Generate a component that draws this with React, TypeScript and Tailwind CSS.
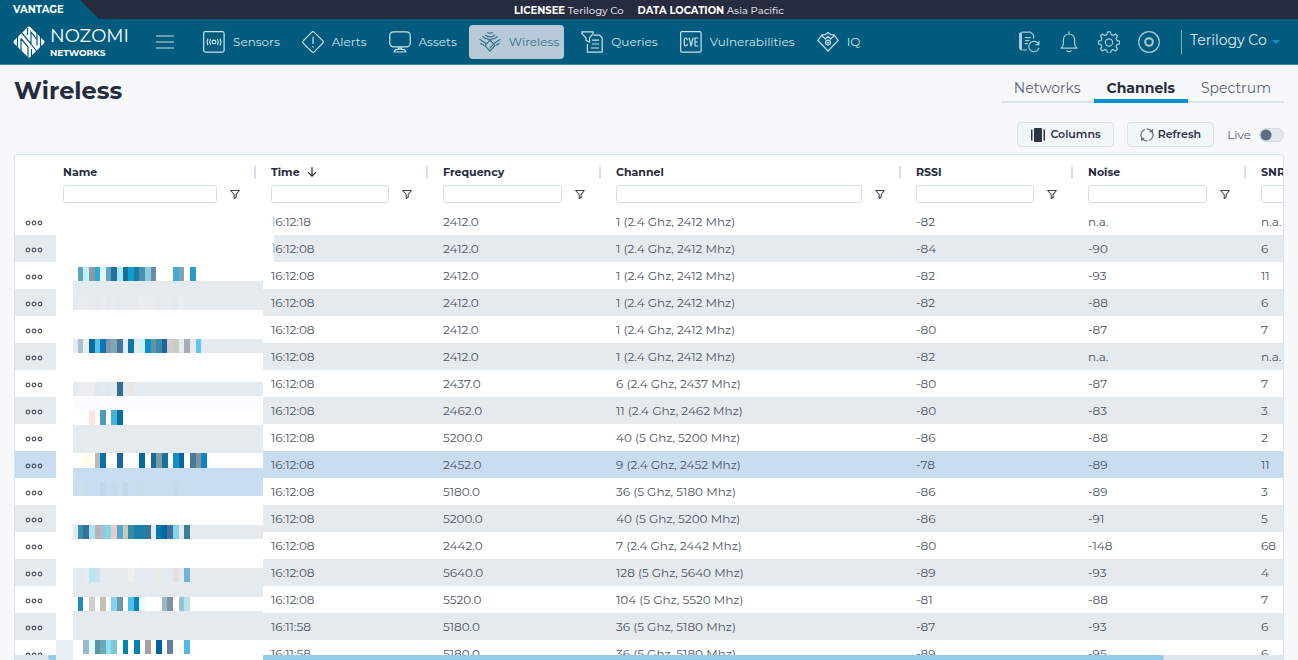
import { useState } from "react";
import type { ReactNode } from "react";
import clsx from "clsx";

const Icon = ({ children }: { children: ReactNode }) => (
  <svg
    viewBox="0 0 22 22"
    fill="none"
    stroke="currentColor"
    strokeWidth="1.2"
    strokeLinecap="round"
    strokeLinejoin="round"
    aria-hidden="true"
    className="h-[22px] w-[22px] shrink-0"
  >
    {children}
  </svg>
);

const SensorsIcon = () => (
  <Icon>
    <rect x="0.7" y="0.7" width="20.4" height="20.4" rx="1.8" />
    <circle cx="11" cy="11" r="1.8" />
    <path d="M7.4 8.6c-.9 1.500-.9 3.300 0 4.800M14.600 8.600c.9 1.500.9 3.300 0 4.800M4.800 8c-.9 1.900-.9 4.100 0 6M17.200 8c.9 1.900.9 4.100 0 6" />
  </Icon>
);

const AlertsIcon = () => (
  <Icon>
    <path d="M9.900 1.200 1.200 9.900a1.500 1.500 0 0 0 0 2.200l8.700 8.700a1.500 1.500 0 0 0 2.200 0l8.700-8.700a1.500 1.500 0 0 0 0-2.200l-8.700-8.700a1.500 1.500 0 0 0-2.200 0Z" />
    <path d="M11 6v6.500M11 15.500v.6" />
  </Icon>
);

const AssetsIcon = () => (
  <Icon>
    <rect x="0.8" y="0.8" width="20.4" height="15" rx="3.600" />
    <path d="M9.800 15.800v2.200M12.200 15.800v2.200M5.200 21c0-1.800 2-2.800 5.800-2.800s5.800 1 5.800 2.800Z" />
  </Icon>
);

const WirelessIcon = () => (
  <Icon>
    <path d="m11 9 5 5.600-5 5.600-5-5.600ZM11 16.800l2.800-3" />
    <path d="M8.600 1.600c1.500.9 3.300.9 4.800 0M6.400 4.200c2.700 2 6.500 2 9.200 0M3.600 5.600c4.200 4 10.600 4 14.800 0M1 8.600l5.600 3.600M21 8.600l-5.600 3.600M1.800 12.400l3 1.800M20.200 12.400l-3 1.800" />
  </Icon>
);

const QueriesIcon = () => (
  <Icon>
    <path d="M.8.800h11.400v1.600L8.600 6.800v4.400L5 9.200V6.800L.8 2.400Z" />
    <path d="M13 4.200h5.600l2.600 2.600v14.400H6.400v-7.600M11.400 9.200h6.200M11.400 13h6.200M10 17h7.600" />
  </Icon>
);

const CveIcon = () => (
  <Icon>
    <rect x="0.7" y="0.7" width="20.4" height="20.4" rx="1.200" />
    <path d="M7.200 8.800c0-1.200-.5-1.800-1.400-1.800s-1.500.6-1.500 1.800v4.400c0 1.200.6 1.800 1.500 1.800s1.400-.6 1.400-1.800M9.200 7l1.900 8L13 7M18 7h-3v8h3M15 11h2.500" />
  </Icon>
);

const IqIcon = () => (
  <Icon>
    <path d="M8.400 3.600 5 3.800.8 9.400 11 20 21.200 9.400 17 3.800l-3.400-.2L11 1.600ZM4.600 4.400 8.400 8 11 5.400 13.600 8l3.800-3.600" />
    <path d="m11 9 2.400 1.200v2.600L11 14.200l-2.400-1.400v-2.600Z" />
    <circle cx="11" cy="11.600" r="0.500" />
  </Icon>
);

const ReportIcon = () => (
  <Icon>
    <path d="M4 1.200h8.600l3 3v3M8.800 19H4M7.400 6.600h5M7.400 9.600h3.600M7.400 12.600h2" />
    <path
      d="M3.400 1.800c-1.200 0-1.800.6-1.800 1.600v13.400c0 1 .6 1.800 1.800 1.800Z"
      fill="currentColor"
    />
    <path d="M21 10.400v3.200h-3.200M20.600 13.200a5.200 5.200 0 1 0 .2 4.200" />
  </Icon>
);

const BellIcon = () => (
  <Icon>
    <path d="M11 .8v1.800M3 17.200h16c-1.800-1.600-2.400-3-2.400-5V8.600a5.600 5.600 0 0 0-11.200 0v3.600c0 2-.6 3.400-2.400 5ZM9 19.800c.9 1.100 3.100 1.100 4 0" />
  </Icon>
);

const GearIcon = () => (
  <Icon>
    <path d="M9.600.9h2.800l.8 2.700 1.900.8 2.400-1.400 2 2-1.400 2.400.8 1.900 2.700.8v2.800l-2.700.8-.8 1.900 1.400 2.400-2 2-2.400-1.400-1.900.8-.8 2.700H9.600l-.8-2.700-1.900-.8L4.500 20l-2-2 1.400-2.400-.8-1.900-2.700-.8v-2.800l2.700-.8.8-1.900L2.500 5l2-2 2.400 1.400 1.900-.8Z" />
    <circle cx="11" cy="11.500" r="3.600" />
  </Icon>
);

const AccountIcon = () => (
  <Icon>
    <circle cx="11" cy="11" r="10.300" />
    <circle cx="11" cy="11" r="3.800" strokeWidth="2" />
  </Icon>
);

const LogoMark = () => (
  <svg viewBox="0 0 32 32" aria-hidden="true" className="h-8 w-8 shrink-0">
    <path
      fill="#fff"
      d="M14.800 1a1.700 1.700 0 0 1 2.400 0L31 14.800a1.700 1.700 0 0 1 0 2.400L17.200 31a1.700 1.700 0 0 1-2.400 0L1 17.200a1.700 1.700 0 0 1 0-2.400Z"
    />
    <path
      fill="none"
      stroke="#005b7f"
      strokeWidth="1.200"
      d="M4.500 11v10.500M8 12.500l7 8.500V31M8 26V12.500M8.500 6.500 18 18V6l6 7.500V6.500M14.500 2v7M18 18l5.500 7M24 19.500V13M27.500 21V10.500M18.500 30v-7"
    />
  </svg>
);

const FilterIcon = () => (
  <svg
    viewBox="0 0 10 10"
    fill="none"
    stroke="currentColor"
    strokeWidth="1.100"
    strokeLinejoin="round"
    aria-hidden="true"
    className="h-[10px] w-[10px]"
  >
    <path d="M.7 1.500h8.600L6.200 5.500v2.800L4.200 9.400V5.500Z" />
  </svg>
);

const navItems = [
  { label: "Sensors", icon: SensorsIcon },
  { label: "Alerts", icon: AlertsIcon },
  { label: "Assets", icon: AssetsIcon },
  { label: "Wireless", icon: WirelessIcon },
  { label: "Queries", icon: QueriesIcon },
  { label: "Vulnerabilities", icon: CveIcon },
  { label: "IQ", icon: IqIcon },
];

const actions = [
  { label: "Reports", icon: ReportIcon },
  { label: "Notifications", icon: BellIcon },
  { label: "Settings", icon: GearIcon },
  { label: "Account", icon: AccountIcon },
];

const tabs = ["Networks", "Channels", "Spectrum"];

const columns = [
  { label: "Name", width: "w-[208px]" },
  { label: "Time", width: "w-[172px]", sorted: true },
  { label: "Frequency", width: "w-[173px]" },
  { label: "Channel", width: "w-[300px]" },
  { label: "RSSI", width: "w-[172px]" },
  { label: "Noise", width: "w-[173px]" },
  { label: "SNR", width: "w-[172px]" },
];

const rows = [
  ["16:12:18", "2412.0", "1 (2.4 Ghz, 2412 Mhz)", "-82", "n.a.", "n.a."],
  ["16:12:08", "2412.0", "1 (2.4 Ghz, 2412 Mhz)", "-84", "-90", "6"],
  ["16:12:08", "2412.0", "1 (2.4 Ghz, 2412 Mhz)", "-82", "-93", "11"],
  ["16:12:08", "2412.0", "1 (2.4 Ghz, 2412 Mhz)", "-82", "-88", "6"],
  ["16:12:08", "2412.0", "1 (2.4 Ghz, 2412 Mhz)", "-80", "-87", "7"],
  ["16:12:08", "2412.0", "1 (2.4 Ghz, 2412 Mhz)", "-82", "n.a.", "n.a."],
  ["16:12:08", "2437.0", "6 (2.4 Ghz, 2437 Mhz)", "-80", "-87", "7"],
  ["16:12:08", "2462.0", "11 (2.4 Ghz, 2462 Mhz)", "-80", "-83", "3"],
  ["16:12:08", "5200.0", "40 (5 Ghz, 5200 Mhz)", "-86", "-88", "2"],
  ["16:12:08", "2452.0", "9 (2.4 Ghz, 2452 Mhz)", "-78", "-89", "11"],
  ["16:12:08", "5180.0", "36 (5 Ghz, 5180 Mhz)", "-86", "-89", "3"],
  ["16:12:08", "5200.0", "40 (5 Ghz, 5200 Mhz)", "-86", "-91", "5"],
  ["16:12:08", "2442.0", "7 (2.4 Ghz, 2442 Mhz)", "-80", "-148", "68"],
  ["16:12:08", "5640.0", "128 (5 Ghz, 5640 Mhz)", "-89", "-93", "4"],
  ["16:12:08", "5520.0", "104 (5 Ghz, 5520 Mhz)", "-81", "-88", "7"],
  ["16:11:58", "5180.0", "36 (5 Ghz, 5180 Mhz)", "-87", "-93", "6"],
  ["16:11:58", "5180.0", "36 (5 Ghz, 5180 Mhz)", "-89", "-95", "6"],
];
const selectedRow = 9;

// Mosaic that hides the names: plain bands first, then coloured cells.
// [first band, number of bands, fill]
const bands: [number, number, string][] = [
  [1, 2, "#e5eaee"],
  [5, 1, "#e5eaee"],
  [8, 1, "#e5eaee"],
  [9, 1, "#fbfcfe"],
  [11, 2, "#e5eaee"],
  [14, 2, "#c8ddf0"],
  [18, 1, "#e5eaee"],
  [21, 2, "#e5eaee"],
  [24, 2, "#e5eaee"],
];

// band index -> fill by cell index
const mosaic: Record<number, Record<number, string>> = {
  0: { 0: "#5ba6be", 1: "#bdf3ff", 2: "#8c9aa3", 3: "#2ba9d8", 4: "#e0f6fd", 5: "#60a5c4", 6: "#2a6fa0", 7: "#a8e9f8", 8: "#1d6d9c", 9: "#0aa2d3", 10: "#1c7aa5", 11: "#4593b4", 12: "#8acbdc", 13: "#6c8aa5", 16: "#fffff0", 17: "#43acd4", 18: "#80a3ad", 20: "#259bc9" },
  2: { 0: "#eaedf0", 1: "#e7ecef", 2: "#e7ebef", 4: "#e9edf0", 6: "#e8ecef", 9: "#e7ebee", 11: "#eaedf0", 12: "#eaedf0", 13: "#eaedf0", 16: "#e8ecef", 18: "#ebeef1" },
  5: { 0: "#a2c3d0", 1: "#eceef0", 2: "#056ea8", 3: "#56c0e6", 4: "#0a76b3", 5: "#8094ac", 6: "#7fa8b3", 7: "#457699", 9: "#0c79a5", 11: "#c9f2f4", 12: "#0d8fc5", 13: "#6490aa", 14: "#3d87a8", 15: "#1f659c", 16: "#d2cace", 17: "#c8cdbd", 19: "#a4abb2", 21: "#60c5ec" },
  8: { 0: "#ecedef", 1: "#ecedef", 2: "#ecedef", 3: "#dfe8ef", 4: "#e2e9ef", 5: "#dfe8ec", 7: "#356f99", 9: "#ebe6e6" },
  10: { 2: "#ffe3dc", 4: "#519bb8", 6: "#48b2dc", 7: "#0670a3" },
  13: { 1: "#ffffe3", 3: "#bfb8b2", 4: "#0672aa", 5: "#fffee8", 7: "#1c649a", 8: "#fffff3", 11: "#05689c", 13: "#176d97", 14: "#7d9ba5", 15: "#14759c", 17: "#1090c3", 18: "#04679a", 20: "#457a9b", 21: "#8890a2", 22: "#0688c2" },
  15: { 0: "#ccdfef", 1: "#c9ddec", 4: "#c0d8e9", 6: "#c5dbec", 8: "#c0d8e9", 11: "#c9dce9", 14: "#cbdcec", 17: "#c5dbeb", 19: "#cbdeec" },
  18: { 0: "#3391b3", 1: "#317597", 2: "#aae2ef", 3: "#b8b3b1", 4: "#9fc3d3", 5: "#83d8e8", 6: "#e6ccc6", 7: "#54a9c8", 8: "#c8cabe", 9: "#3389a7", 10: "#1d80a9", 11: "#1d80a9", 12: "#32759c", 14: "#0076ad", 15: "#0566a1", 16: "#42709a", 17: "#85d5ea", 19: "#3b7f97" },
  21: { 1: "#e8ecee", 2: "#b7e7ef", 3: "#cbe2ea", 9: "#f0efef", 14: "#e6ebdd", 17: "#e6e0dc", 19: "#6eb6d6" },
  23: { 0: "#1f8cc0", 2: "#d4ccc6", 4: "#c2bfba", 6: "#82d2ea", 7: "#6e98ac", 9: "#4cc1e8", 10: "#0687bc", 11: "#e8ffff", 13: "#fffffb", 15: "#96b8ca", 16: "#7e94a2", 18: "#94c2ce", 19: "#bbe3ee" },
  26: { 1: "#9cb9c6", 2: "#e2fdf6", 3: "#5b94a4", 4: "#68a8bd", 5: "#8ee1f1", 6: "#82c4d8", 8: "#0680ad", 10: "#0681b3", 12: "#a5a2a6", 13: "#fffeea", 14: "#0062a0", 16: "#60829a", 19: "#50bbde" },
};

const bandTop = (band: number) => Math.round(59 + band * 14.33);
const cellLeft = (cell: number) => 21.7 + cell * 5.61;

const NameMask = () => (
  <svg
    viewBox="0 0 218 452"
    aria-hidden="true"
    shapeRendering="crispEdges"
    className="pointer-events-none absolute left-[41px] top-[53px] h-[452px] w-[218px]"
  >
    <path fill="#fff" d="M0 0h218v54h-11v398H0Z" />
    <path fill="#a9d3ee" d="M217 8h1v10h-1zM217 35h1v10h-1z" />
    {bands.map(([band, count, fill]) => (
      <rect
        key={band}
        x="17"
        y={bandTop(band)}
        width="190"
        height={bandTop(band + count) - bandTop(band)}
        fill={fill}
      />
    ))}
    {Object.entries(mosaic).map(([band, cells]) =>
      Object.entries(cells).map(([cell, fill]) => (
        <rect
          key={`${band}-${cell}`}
          x={cellLeft(Number(cell))}
          y={bandTop(Number(band))}
          width="5.700"
          height={bandTop(Number(band) + 1) - bandTop(Number(band))}
          fill={fill}
        />
      ))
    )}
    <rect x="0" y="432" width="17" height="20" fill="#e9eef1" />
  </svg>
);

const TopBar = () => (
  <div className="relative flex h-[19px] shrink-0 items-center justify-center gap-[14px] bg-[#262c3d] pt-[2px] text-[10px] font-medium leading-none text-[#d7dbe2]">
    <span className="absolute left-0 top-0 flex h-full w-[99px] items-center bg-[#005b7f] pl-[13px] pt-px font-bold text-white [clip-path:polygon(0_0,80px_0,100%_100%,0_100%)]">
      VANTAGE
    </span>
    <p>
      <b className="text-white">LICENSEE</b> Terilogy Co
    </p>
    <p>
      <b className="text-white">DATA LOCATION</b> Asia Pacific
    </p>
  </div>
);

const Header = () => (
  <header className="flex h-[46px] shrink-0 items-center border-b border-[#3f86a3] bg-[#005b7f] pl-[13px] pr-[18px] text-[#cfe0e8]">
    <a href="#home" className="flex w-[117px] items-center gap-[5px] text-white">
      <LogoMark />
      <span className="flex flex-col">
        <span className="text-[18px] leading-[22px]">NOZOMI</span>
        <span className="text-[9px] font-bold leading-[11px]">NETWORKS</span>
      </span>
    </a>
    <button type="button" aria-label="Menu" className="ml-[26px] w-[18px]">
      <svg
        viewBox="0 0 18 14"
        stroke="currentColor"
        strokeWidth="1.200"
        aria-hidden="true"
        className="h-[14px] w-[18px]"
      >
        <path d="M0 1h18M0 7h18M0 13h18" />
      </svg>
    </button>
    <nav className="ml-[19px] flex items-center gap-[7px]">
      {navItems.map((item) => (
        <a
          key={item.label}
          href={`#${item.label.toLowerCase()}`}
          className={clsx(
            "flex h-[34px] items-center gap-[8px] rounded pl-[10px] pr-[5px] text-[12px]",
            item.label === "Wireless" && "bg-[#b6cbd7] text-[#356f8b]"
          )}
        >
          <item.icon />
          {item.label}
        </a>
      ))}
    </nav>
    <div className="ml-auto flex items-center gap-[18px]">
      {actions.map((action) => (
        <button
          key={action.label}
          type="button"
          aria-label={action.label}
          className="text-[#a9cbd9]"
        >
          <action.icon />
        </button>
      ))}
    </div>
    <div className="ml-[21px] flex h-6 items-start gap-[5px] border-l border-[#7fadbf] pl-[8px]">
      <select
        aria-label="Organization"
        className="appearance-none bg-transparent text-[14px] leading-5 text-[#e1ecf1]"
      >
        <option>Terilogy Co</option>
      </select>
      <svg
        viewBox="0 0 8 4"
        aria-hidden="true"
        className="mt-[10px] h-1 w-2 fill-[#0b93d2]"
      >
        <path d="M0 0h8L4 4Z" />
      </svg>
    </div>
  </header>
);

const Toolbar = () => {
  const [live, setLive] = useState(false);

  return (
    <div className="flex items-center justify-end gap-[13px] text-[11px] font-semibold text-[#2c3345]">
      <button
        type="button"
        className="flex h-[25px] items-center gap-[4px] rounded border border-[#d8e3ea] bg-[#f1f6f9] px-[12px]"
      >
        <svg
          viewBox="0 0 16 14"
          fill="currentColor"
          aria-hidden="true"
          className="h-[14px] w-[16px]"
        >
          <rect x="1" y="1.500" width="1.500" height="11" />
          <rect x="4" y="0" width="8" height="14" rx="1" />
          <rect x="13.500" y="1.500" width="1.500" height="11" />
        </svg>
        Columns
      </button>
      <button
        type="button"
        className="flex h-[25px] items-center gap-[4px] rounded border border-[#d8e3ea] bg-[#f1f6f9] px-[12px]"
      >
        <svg
          viewBox="0 0 14 14"
          fill="none"
          stroke="#5d6675"
          strokeWidth="1.100"
          aria-hidden="true"
          className="h-[14px] w-[14px]"
        >
          <path d="M4.800 1.400a6 6 0 0 0-2.600 9.200M9.200 12.600a6 6 0 0 0 2.600-9.200M6.400 1a6 6 0 0 1 5.200 2.200M7.600 13a6 6 0 0 1-5.200-2.200M12.300 1v2.600H9.700M1.700 13v-2.600h2.600" />
        </svg>
        Refresh
      </button>
      <label className="flex items-center gap-[8px] text-[12px] font-normal text-[#5b6373]">
        Live
        <input
          type="checkbox"
          role="switch"
          checked={live}
          onChange={(e) => setLive(e.target.checked)}
          className="h-[14px] w-[25px] appearance-none rounded-full border border-[#cfdce4] bg-[#e3eaee] bg-[radial-gradient(circle_at_6px_6px,#5f6e80_5px,transparent_6px)] checked:bg-[#0290d3]"
        />
      </label>
    </div>
  );
};

const ChannelsTable = () => (
  <div className="relative flex min-h-0 flex-1 flex-col overflow-hidden rounded-t border border-b-0 border-[#d9e5ec] bg-white">
    <div className="min-h-0 flex-1 overflow-hidden">
      <table className="w-[1410px] table-fixed border-collapse text-left text-[12px] text-[#4d5565]">
        <thead>
          <tr className="h-[53px]">
            <th className="w-[40px]" aria-label="Actions" />
            {columns.map((column) => (
              <th
                key={column.label}
                className={clsx(
                  "pb-[5px] pl-2 pt-[9px] align-top text-[11px] font-bold text-[#262c3d]",
                  column.width
                )}
              >
                <div className="flex h-4 items-center justify-between pr-[7px]">
                  <span className="flex items-center gap-[7px]">
                    {column.label}
                    {column.sorted && (
                      <svg
                        viewBox="0 0 10 10"
                        fill="none"
                        stroke="currentColor"
                        strokeWidth="1.200"
                        aria-hidden="true"
                        className="h-[10px] w-[10px]"
                      >
                        <path d="M5 0v9M1 5.200l4 4 4-4" />
                      </svg>
                    )}
                  </span>
                  <span className="h-[13px] w-[2px] bg-[#d9e0ec]" />
                </div>
                <div className="mt-[5px] flex items-center gap-[13px] pr-[23px]">
                  <input
                    type="text"
                    aria-label={`Filter ${column.label}`}
                    className="h-[18px] min-w-0 flex-1 rounded-[3px] border border-[#d3dfe7] bg-white px-1 font-normal"
                  />
                  <button
                    type="button"
                    aria-label={`${column.label} filter options`}
                    className="text-[#3d4556]"
                  >
                    <FilterIcon />
                  </button>
                </div>
              </th>
            ))}
          </tr>
        </thead>
        <tbody>
          {rows.map((row, i) => (
            <tr
              key={i}
              className={clsx(
                "h-[27px]",
                i === selectedRow
                  ? "bg-[#c8ddf0]"
                  : i % 2 === 1 && "bg-[#e5eaee]"
              )}
            >
              <td className="p-0">
                <button
                  type="button"
                  aria-label="Row actions"
                  className="ml-[10px] mt-[3px] block"
                >
                  <svg
                    viewBox="0 0 18 6"
                    fill="none"
                    stroke="#4c5464"
                    strokeWidth="1.200"
                    aria-hidden="true"
                    className="h-[6px] w-[18px]"
                  >
                    <circle cx="3" cy="3" r="1.800" />
                    <circle cx="9" cy="3" r="1.800" />
                    <circle cx="15" cy="3" r="1.800" />
                  </svg>
                </button>
              </td>
              <td />
              {row.map((value, j) => (
                <td key={j} className="p-0 pl-2 leading-4">
                  {value}
                </td>
              ))}
            </tr>
          ))}
        </tbody>
      </table>
    </div>
    <div className="h-[5px] shrink-0 bg-[#dde7ed]">
      <div className="ml-[33px] h-full w-[88%] rounded-full bg-[#92cce6]" />
    </div>
    <NameMask />
  </div>
);

export default function App() {
  const [tab, setTab] = useState("Channels");

  return (
    <div className="flex h-screen flex-col overflow-hidden bg-[#f6f8fa] font-['Montserrat','Inter',sans-serif]">
      <TopBar />
      <Header />
      <main className="flex min-h-0 flex-1 flex-col px-[14px]">
        <div className="flex items-start justify-between pt-[10px]">
          <h1 className="text-[24px] font-bold leading-8 text-[#262c3d]">
            Wireless
          </h1>
          <div role="tablist" className="flex border-b-2 border-[#d9e5ec]">
            {tabs.map((name) => (
              <button
                key={name}
                type="button"
                role="tab"
                aria-selected={tab === name}
                onClick={() => setTab(name)}
                className={clsx(
                  "-mb-[2px] h-[28px] border-b-4 px-[13px] pt-[3px] text-[14px]",
                  tab === name
                    ? "border-[#0290d3] font-bold text-[#262c3d]"
                    : "border-transparent text-[#5b6373]"
                )}
              >
                {name}
              </button>
            ))}
          </div>
        </div>
        <div className="pb-[7px] pt-[15px]">
          <Toolbar />
        </div>
        <ChannelsTable />
      </main>
    </div>
  );
}
